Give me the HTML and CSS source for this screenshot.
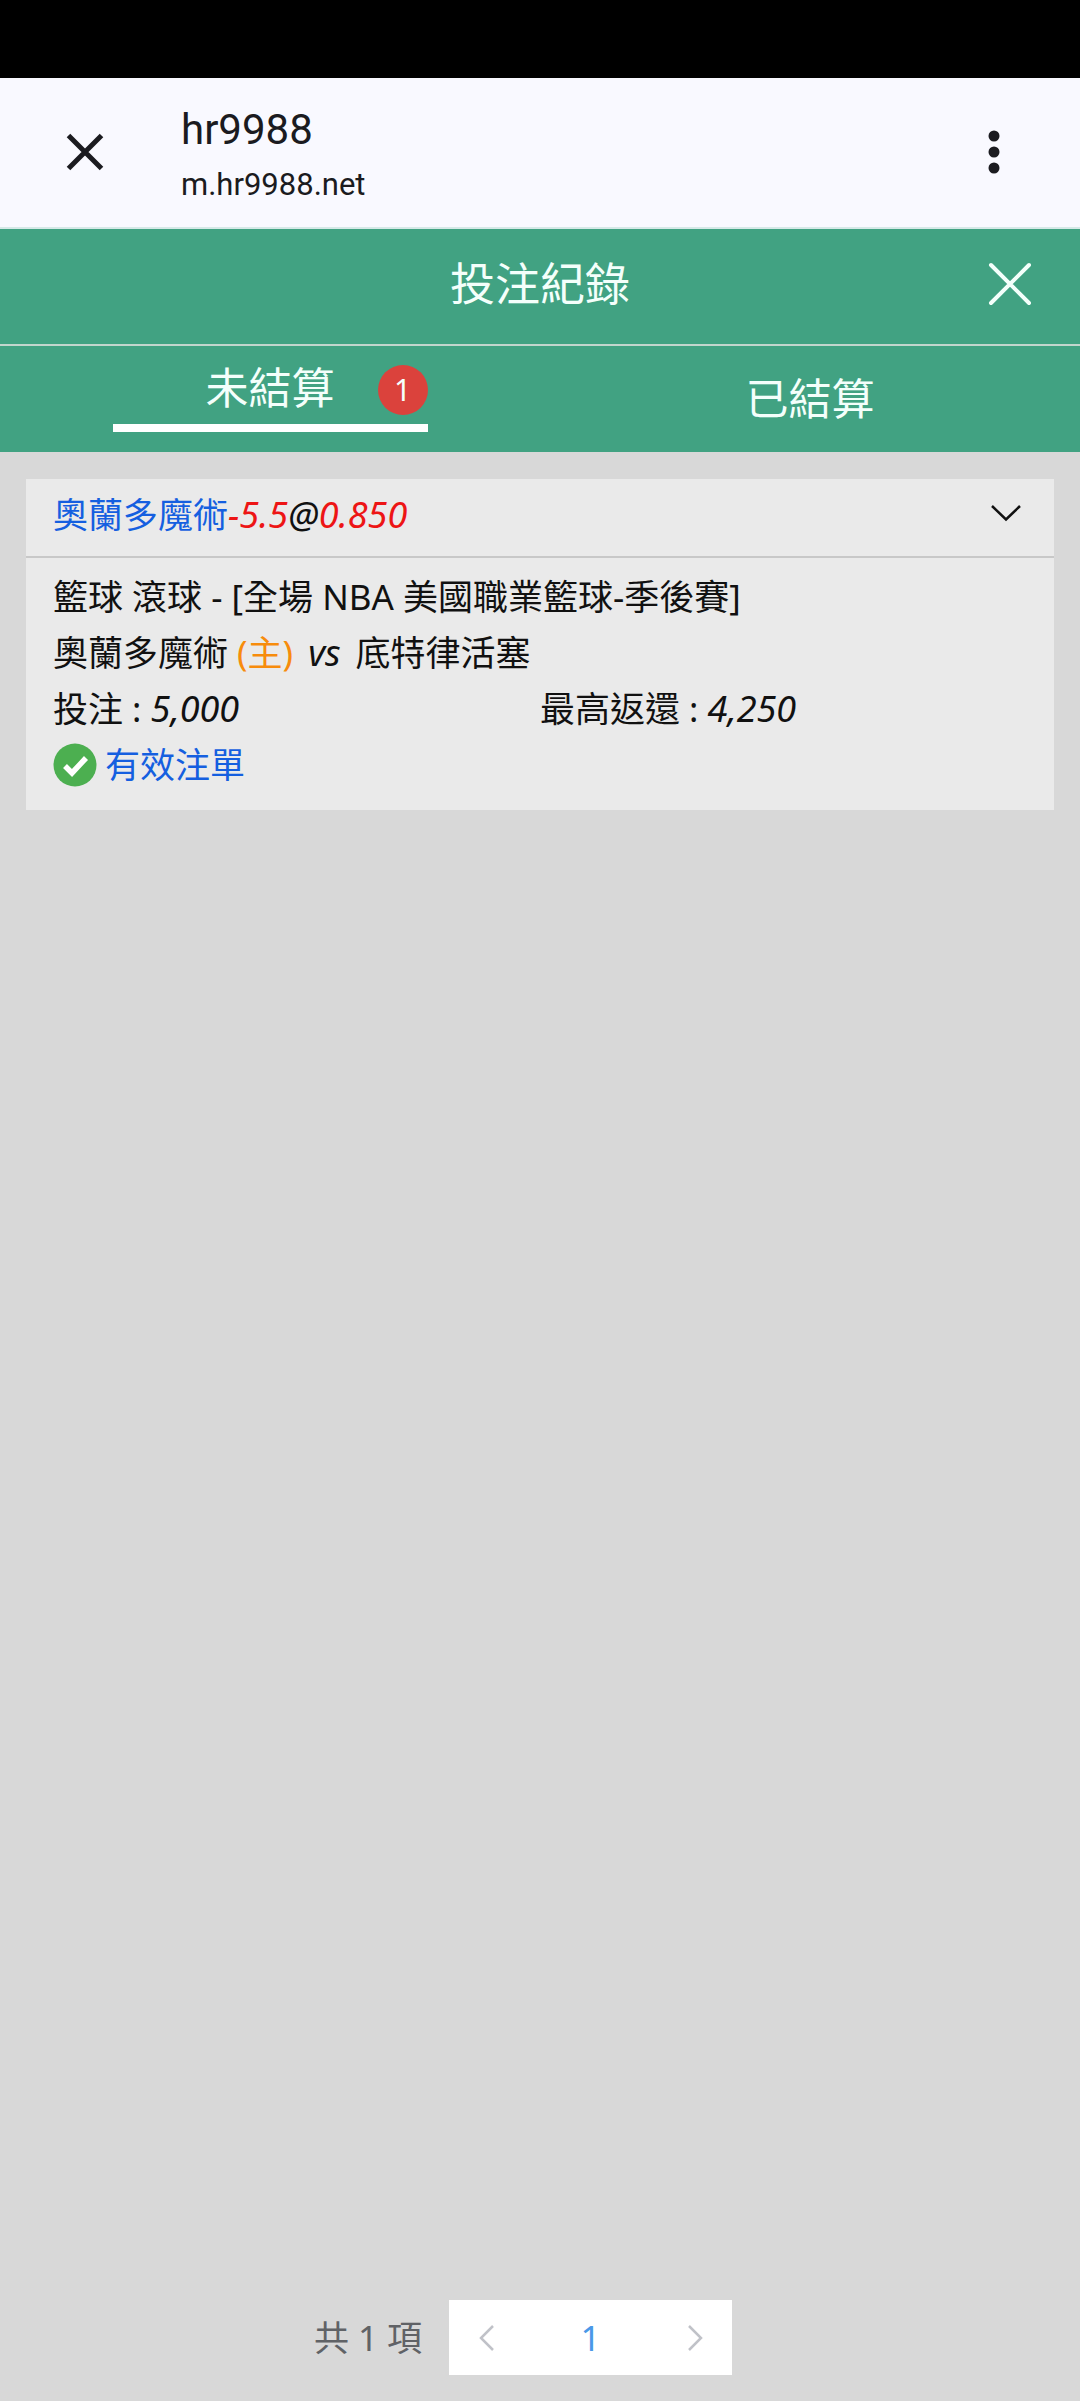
FILE: index.html
```html
<!DOCTYPE html>
<html lang="zh-Hant">
<head>
<meta charset="utf-8">
<meta name="viewport" content="width=device-width, initial-scale=1">
<title>投注紀錄</title>
<link rel="stylesheet" href="styles.css">
</head>
<body>
<div class="status-bar"></div>
<header class="browser-bar">
  <button class="icon-button" type="button" aria-label="關閉分頁">
    <svg width="40" height="40" viewBox="0 0 40 40" fill="none" stroke="#1b1b20" stroke-width="5"><path d="M3.500 3.500l33 33M36.500 3.500l-33 33"/></svg>
  </button>
  <div class="site">
    <span class="site-title">hr9988</span>
    <span class="site-host">m.hr9988.net</span>
  </div>
  <button class="icon-button" type="button" aria-label="更多選項">
    <svg width="12" height="44" viewBox="0 0 12 44" fill="#1b1b20"><circle cx="6" cy="6" r="5.500"/><circle cx="6" cy="22" r="5.500"/><circle cx="6" cy="38" r="5.500"/></svg>
  </button>
</header>
<div class="title-bar">
  <h1 class="title">投注紀錄</h1>
  <button class="icon-button" type="button" aria-label="關閉">
    <svg width="44" height="44" viewBox="0 0 44 44" fill="none" stroke="#f4fffb" stroke-width="4" stroke-linecap="round"><path d="M3 3l38 38M41 3L3 41"/></svg>
  </button>
</div>
<nav class="tabs">
  <button class="tab tab-active" type="button"><span class="tab-label">未結算<span class="badge">1</span></span></button>
  <button class="tab" type="button">已結算</button>
</nav>
<main class="content">
  <article class="bet">
    <div class="bet-head">
      <h2 class="pick"><span class="blue">奧蘭多魔術</span><em><span class="red">-5.5</span>@<span class="red">0.850</span></em></h2>
      <button class="icon-button toggle" type="button" aria-label="收合">
        <svg width="32" height="18" viewBox="0 0 32 18" fill="none" stroke="#111" stroke-width="2.500"><path d="M2 2l14 13.500L30 2"/></svg>
      </button>
    </div>
    <div class="bet-body">
      <p>籃球 滾球 - [全場 NBA 美國職業籃球-季後賽]</p>
      <p>奧蘭多魔術 <span class="orange">(主)</span><em class="versus">vs</em>底特律活塞</p>
      <div class="amounts">
        <p>投注 : <em>5,000</em></p>
        <p>最高返還 : <em>4,250</em></p>
      </div>
      <p class="state blue">
        <svg width="44" height="44" viewBox="0 0 44 44"><circle cx="22" cy="22" r="21.500" fill="#4caf50"/><path d="M12 23l7 7 14-15" fill="none" stroke="#fff" stroke-width="5.500"/></svg>
        有效注單
      </p>
    </div>
  </article>
</main>
<footer class="pagination">
  <span>共 1 項</span>
  <div class="pager">
    <button class="page-step" type="button" aria-label="上一頁" disabled>
      <svg width="16" height="26" viewBox="0 0 16 26" fill="none" stroke="#c0c2c8" stroke-width="2.500"><path d="M14 1L2 13l12 12"/></svg>
    </button>
    <button class="page-number" type="button" aria-current="page">1</button>
    <button class="page-step" type="button" aria-label="下一頁" disabled>
      <svg width="16" height="26" viewBox="0 0 16 26" fill="none" stroke="#c0c2c8" stroke-width="2.500"><path d="M2 1l12 12L2 25"/></svg>
    </button>
  </div>
</footer>
</body>
</html>
```
FILE: styles.css
```css
* {
  box-sizing: border-box;
}

body {
  display: flex;
  flex-direction: column;
  min-height: 100vh;
  margin: 0;
  background: #d8d8d8;
  color: #111;
  font: 35px/56px "Noto Sans", "Noto Sans CJK TC", sans-serif;
}

h1, h2, p {
  margin: 0;
  font-size: inherit;
  font-weight: 400;
}

em {
  font-size: 36px;
}

button {
  padding: 0;
  border: 0;
  background: none;
  color: inherit;
  font: inherit;
}

svg {
  display: block;
}

.icon-button {
  display: grid;
  place-items: center;
  width: 80px;
  height: 80px;
}

.status-bar {
  height: 78px;
  background: #000;
}

.browser-bar {
  display: flex;
  align-items: center;
  padding: 16px 46px 17px 45px;
  border-bottom: 2px solid #d5e9e7;
  background: #f9f9ff;
  color: #1b1b20;
  font-family: Roboto, sans-serif;
}

.site {
  display: flex;
  flex: 1;
  flex-direction: column;
  padding: 6px 0 0 56px;
}

.site-title {
  font-size: 42px;
  line-height: 60px;
}

.site-host {
  font-size: 31px;
  line-height: 50px;
}

.title-bar {
  display: grid;
  grid-template-columns: 80px 1fr 80px;
  align-items: center;
  padding: 15px 30px 20px;
  border-bottom: 2px solid #c2d6cd;
  background: #41a282;
  color: #f4fffb;
}

.title {
  grid-column: 2;
  font-size: 45px;
  text-align: center;
}

.tabs {
  display: grid;
  grid-template-columns: 1fr 1fr;
  justify-items: center;
  height: 106px;
  background: #41a282;
  color: #f4fffb;
  font-size: 43px;
}

.tab {
  display: flex;
  align-items: center;
}

.tab-active {
  padding-bottom: 6px;
}

.tab-label {
  position: relative;
  width: 315px;
  padding-bottom: 8px;
  border-bottom: 8px solid #fff;
}

.badge {
  position: absolute;
  top: 5px;
  right: 0;
  width: 50px;
  border-radius: 25px;
  background: #db423c;
  font-size: 30px;
  line-height: 50px;
}

.content {
  flex: 1;
  padding: 27px 26px;
}

.bet {
  background: #eaeaea;
}

.bet-head {
  display: flex;
  justify-content: space-between;
  padding: 8px 8px 13px 27px;
  border-bottom: 2px solid #c8c8c8;
}

.toggle {
  height: 52px;
}

.bet-body {
  padding: 11px 27px 17px;
}

.amounts {
  display: grid;
  grid-template-columns: 1fr 1fr;
}

.versus {
  margin: 0 15px;
}

.state {
  display: flex;
  align-items: center;
  gap: 8px;
}

.blue {
  color: #155fe0;
}

.red {
  color: #ed1515;
}

.orange {
  color: #f78c0c;
}

.pagination {
  display: flex;
  justify-content: center;
  align-items: center;
  gap: 27px;
  padding: 0 34px 26px 0;
  color: #606266;
  line-height: 52px;
}

.pager {
  display: flex;
  height: 75px;
  background: #fff;
}

.page-step {
  display: grid;
  place-items: center;
  width: 75px;
}

.page-number {
  width: 133px;
  color: #4a98e8;
}
```
